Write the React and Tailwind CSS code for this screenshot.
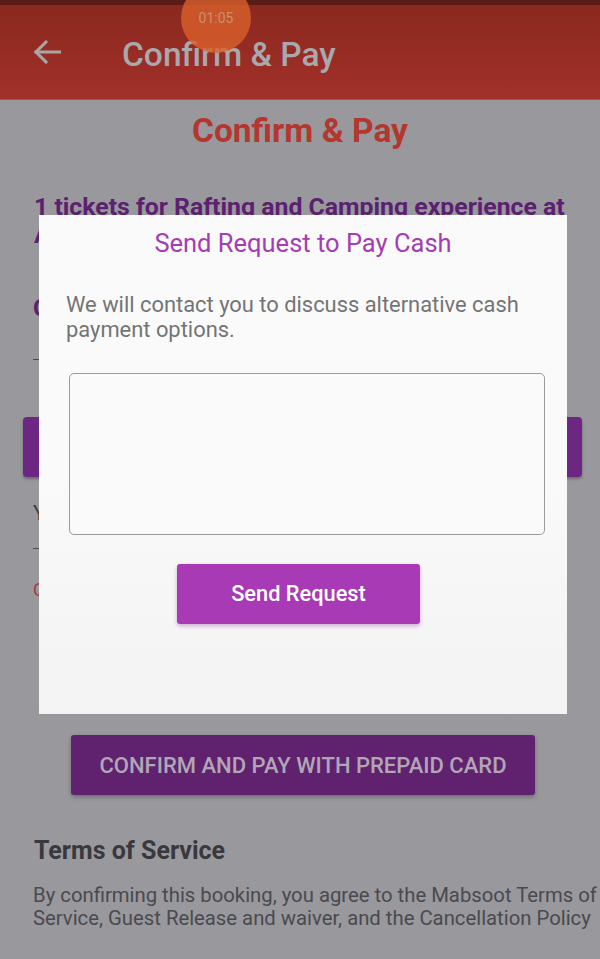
import React from "react";

export default function App() {
  return (
    <div
      className="relative w-[600px] h-[959px] overflow-hidden bg-[#99989d]"
      style={{ fontFamily: "Roboto, 'Noto Sans', sans-serif" }}
    >
      {/* status strip */}
      <div className="h-[5px] bg-[#5a1c16]" />
      {/* app bar */}
      <div className="relative h-[95px] bg-gradient-to-b from-[#8a291f] to-[#a2302a] border-b border-[#b4552e] flex items-center">
        <svg width="28" height="24" viewBox="0 0 28 24" className="ml-[33px]" fill="none" stroke="#a9a6a6" strokeWidth="3" strokeLinecap="square">
          <path d="M3 12H27" />
          <path d="M13 2L3 12L13 22" />
        </svg>
        <div className="ml-[61px] mt-[5px] text-[33.5px] font-medium text-[#a9a8ad] leading-none">Confirm &amp; Pay</div>
      </div>
      {/* touch indicator */}
      <div className="absolute left-[181px] top-[-17px] w-[70px] h-[70px] rounded-full bg-[#d9602c]/80 flex items-center justify-center">
        <span className="text-[14px] text-[#c98f74]">01:05</span>
      </div>

      {/* page body */}
      <div className="flex flex-col">
        <div className="mt-[11px] text-center text-[33.5px] leading-[40px] font-bold text-[#b4372f]">Confirm &amp; Pay</div>
        <div className="mt-[42px] px-[34px] text-[24.8px] leading-[28px] font-bold text-[#5b2170] whitespace-nowrap">
          1 tickets for Rafting and Camping experience at
          <br />
          Al Hajar Mountains
        </div>
        <div className="mt-[45px] px-[33px] text-[24.8px] leading-[28px] font-bold text-[#5b2170]">Cost: 150 AED</div>
        <div className="mx-[33px] mt-[37px] h-px bg-[#4a4a4e]" />
        <div className="ml-[23px] mr-[18px] mt-[57px] h-[60px] rounded-[4px] bg-[#6b2782] shadow-[0_2px_3px_rgba(0,0,0,0.3)]" />
        <div className="mt-[23px] px-[33px] text-[21px] leading-[26px] text-[#3d3d40]">Your balance</div>
        <div className="mx-[33px] mt-[22px] h-px bg-[#4a4a4e]" />
        <div className="mt-[29px] px-[33px] text-[18px] leading-[24px] text-[#a8394a]">Card balance is not enough</div>

        <div className="mt-[133px] flex justify-center">
          <div className="ml-[6px] w-[464px] h-[60px] rounded-[3px] bg-[#60226e] shadow-[0_2px_4px_rgba(0,0,0,0.3)] flex items-center justify-center text-[22px] font-medium text-[#b1a6b6]">
            CONFIRM AND PAY WITH PREPAID CARD
          </div>
        </div>
        <div className="mt-[41px] px-[34px] text-[25px] leading-[30px] font-bold text-[#39393d]">Terms of Service</div>
        <div className="mt-[18px] pl-[33px] text-[20.3px] leading-[23px] text-[#4a4a4e] whitespace-nowrap">
          By confirming this booking, you agree to the Mabsoot Terms of
          <br />
          Service, Guest Release and waiver, and the Cancellation Policy
        </div>
      </div>

      {/* dialog */}
      <div className="absolute left-[39px] top-[215px] w-[528px] h-[499px] bg-gradient-to-b from-[#fafafa] via-[#fafafa] to-[#f3f3f4] flex flex-col">
        <div className="mt-[13px] text-center text-[25.5px] leading-[30px] text-[#a43db3]">Send Request to Pay Cash</div>
        <div className="mt-[34px] pl-[27px] text-[21.9px] leading-[25px] text-[#747474] whitespace-nowrap">
          We will contact you to discuss alternative cash
          <br />
          payment options.
        </div>
        <div className="ml-[30px] mt-[31px] w-[476px] h-[162px] rounded-[5px] border-[1.5px] border-[#9b9b9b] bg-[#fafafa]" />
        <div className="mt-[29px] flex">
          <div className="ml-[138px] w-[243px] h-[60px] rounded-[3px] bg-[#a83ab5] shadow-[0_2px_4px_rgba(120,40,140,0.35)] flex items-center justify-center text-[21.8px] font-medium text-white">
            Send Request
          </div>
        </div>
      </div>
    </div>
  );
}
